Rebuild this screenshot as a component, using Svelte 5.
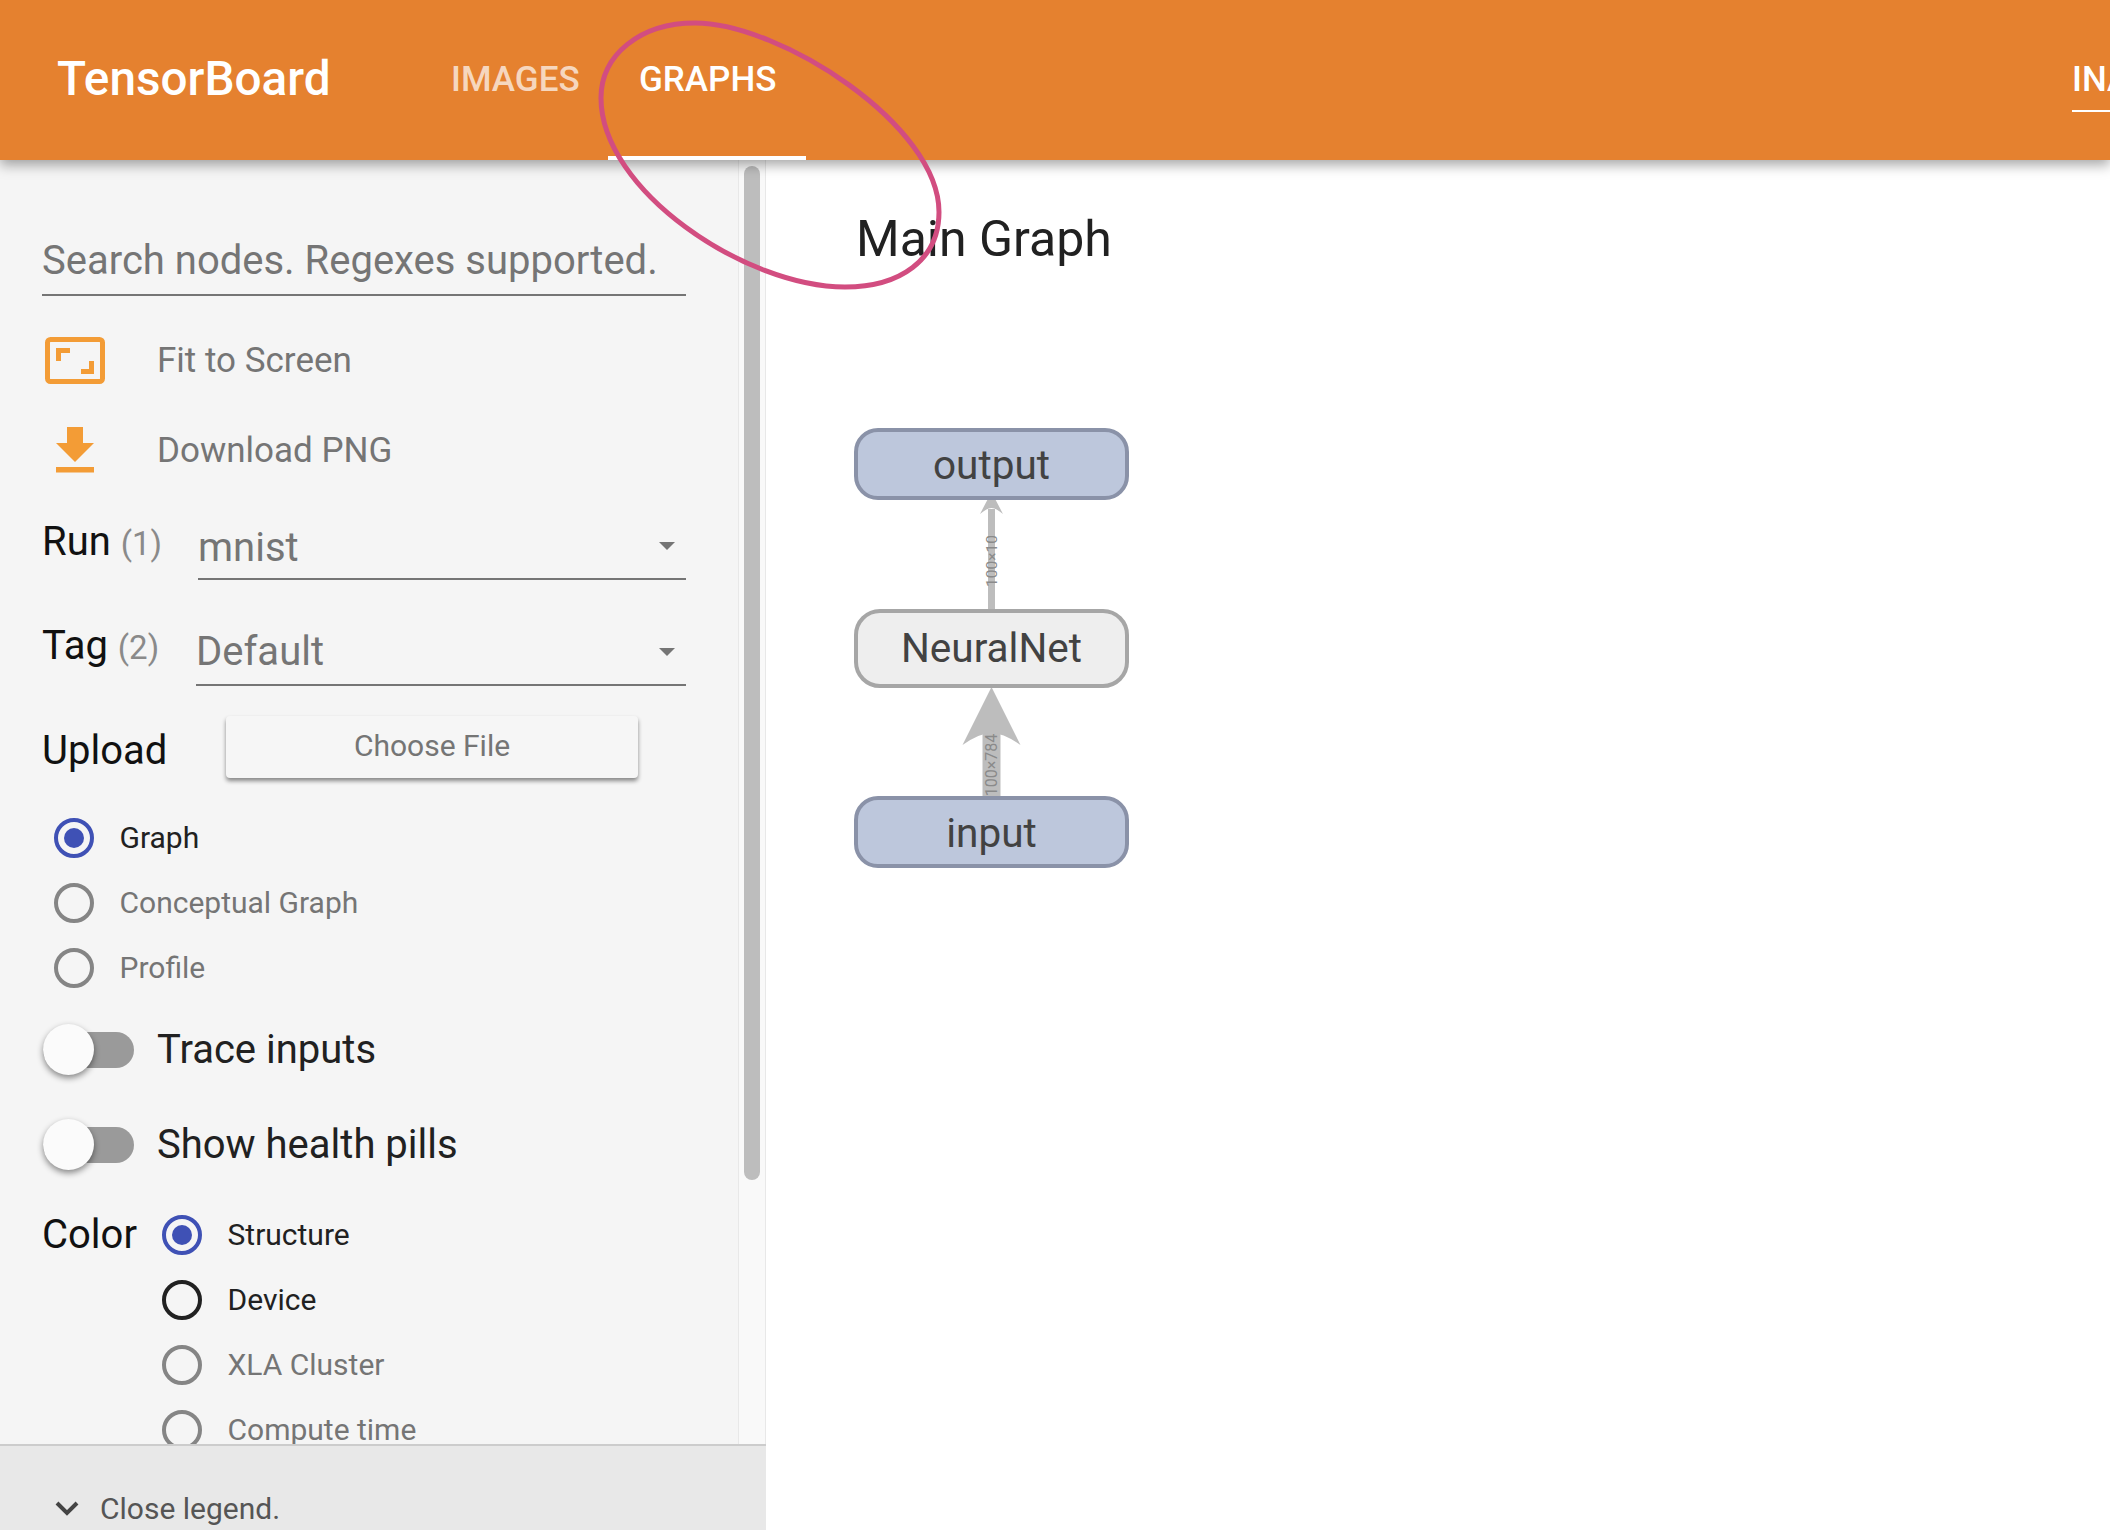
<script>
  const graphModes = [
    { label: "Graph", state: "on" },
    { label: "Conceptual Graph", state: "off" },
    { label: "Profile", state: "off" }
  ];
  const colorModes = [
    { label: "Structure", state: "on" },
    { label: "Device", state: "focus" },
    { label: "XLA Cluster", state: "off" },
    { label: "Compute time", state: "off" }
  ];
  const toggles = ["Trace inputs", "Show health pills"];
</script>

<div class="page">
  <header class="topbar">
    <div class="brand">TensorBoard</div>
    <nav class="tabs">
      <div class="tab">IMAGES</div>
      <div class="tab active">GRAPHS</div>
    </nav>
    <div class="inactive">INACTIVE</div>
  </header>

  <div class="body">
    <aside class="sidebar">
      <div class="scroller">
        <div class="pane">
          <div class="search">Search nodes. Regexes supported.</div>

          <div class="action">
            <svg class="action-icon" width="60" height="47" viewBox="0 0 60 47">
              <rect x="2.500" y="2.500" width="55" height="42" rx="3" fill="none" stroke="#f39c36" stroke-width="5" />
              <path d="M11 24V11h14v5H16v8zM49 24v13H36v-5h8v-8z" fill="#f39c36" />
            </svg>
            <span>Fit to Screen</span>
          </div>
          <div class="action">
            <svg class="action-icon" width="60" height="46" viewBox="0 0 60 46">
              <path d="M22 0h16v16h11L30 35 11 16h11zM11 40h38v5.500H11z" fill="#f39c36" />
            </svg>
            <span>Download PNG</span>
          </div>

          <div class="select-row run">
            <div class="field-label">Run <span class="count">(1)</span></div>
            <div class="select">
              <span>mnist</span>
              <i class="caret"></i>
            </div>
          </div>
          <div class="select-row tag">
            <div class="field-label">Tag <span class="count">(2)</span></div>
            <div class="select">
              <span>Default</span>
              <i class="caret"></i>
            </div>
          </div>

          <div class="upload">
            <div class="field-label">Upload</div>
            <button class="file-btn">Choose File</button>
          </div>

          <div class="radios graph-modes">
            {#each graphModes as mode}
              <div class="radio {mode.state}">
                <i class="dot"></i>
                <span>{mode.label}</span>
              </div>
            {/each}
          </div>

          {#each toggles as name}
            <div class="toggle">
              <div class="switch"><i class="knob"></i></div>
              <span>{name}</span>
            </div>
          {/each}

          <div class="color-row">
            <div class="field-label">Color</div>
            <div class="radios">
              {#each colorModes as mode}
                <div class="radio {mode.state}">
                  <i class="dot"></i>
                  <span>{mode.label}</span>
                </div>
              {/each}
            </div>
          </div>
        </div>
        <div class="track"><div class="thumb"></div></div>
      </div>
      <footer class="legend">
        <svg width="26" height="16" viewBox="0 0 26 16">
          <path d="M3 3l10 10L23 3" fill="none" stroke="#444" stroke-width="4" />
        </svg>
        <span>Close legend.</span>
      </footer>
    </aside>

    <main class="main">
      <h1>Main Graph</h1>
      <svg class="scene" width="300" height="470" viewBox="0 0 300 470">
        <!-- upper edge -->
        <rect x="130" y="105" width="7" height="100" fill="#bdbdbd" />
        <path d="M133.500 88 145 110q-7-6-11.500-6T122 110z" fill="#bdbdbd" />
        <text class="edge" transform="translate(133.500 157) rotate(-90)" text-anchor="middle" y="5" font-size="15.500">100×10</text>
        <!-- lower edge -->
        <rect x="124.500" y="320" width="18" height="76" fill="#bdbdbd" />
        <path d="M133.500 283 162.500 341q-17-12-29-12t-29 12z" fill="#bdbdbd" />
        <text class="edge" transform="translate(133.500 361) rotate(-90)" text-anchor="middle" y="5" font-size="16">100×784</text>

        <rect class="const" x="-2" y="26" width="271" height="68" rx="22" />
        <text class="label" x="133.500" y="75" text-anchor="middle">output</text>

        <rect class="meta" x="-2" y="207" width="271" height="75" rx="24" />
        <text class="label" x="133.500" y="258" text-anchor="middle">NeuralNet</text>

        <rect class="const" x="-2" y="394" width="271" height="68" rx="22" />
        <text class="label" x="133.500" y="443" text-anchor="middle">input</text>
      </svg>
    </main>
  </div>

  <svg class="scribble" width="2110" height="320" viewBox="0 0 2110 320">
    <path d="M695 23C780 23 939 125 939 212C939 260 900 287 845 287C745 287 601 190 601 98C601 55 640 23 695 23Z" fill="none" stroke="#d24d80" stroke-width="5" />
  </svg>
</div>

<style>
  :global(body) {
    margin: 0;
    background: #fff;
  }
  .page {
    position: relative;
    width: 2110px;
    height: 1530px;
    overflow: hidden;
    font-family: Roboto, "Noto Sans", sans-serif;
    color: #212121;
  }
  .topbar {
    position: relative;
    z-index: 2;
    display: flex;
    height: 160px;
    padding-left: 57px;
    background: #e5812f;
    color: #fff;
    box-shadow: 0 5px 12px rgba(0, 0, 0, 0.35);
  }
  .brand {
    width: 394px;
    padding-top: 52px;
    font-size: 47.700px;
    font-weight: 500;
    line-height: 54px;
  }
  .tabs {
    display: flex;
  }
  .tab {
    width: 157px;
    padding-top: 59px;
    font-size: 35px;
    font-weight: 500;
    line-height: 42px;
    color: rgba(255, 255, 255, 0.7);
    text-align: left;
  }
  .tab.active {
    width: 198px;
    box-sizing: border-box;
    height: 160px;
    padding-left: 31px;
    color: #fff;
    border-bottom: 4px solid #fff;
  }
  .inactive {
    position: absolute;
    left: 2072px;
    top: 59px;
    width: 120px;
    height: 51px;
    font-size: 35px;
    font-weight: 500;
    line-height: 42px;
    white-space: nowrap;
    border-bottom: 2px solid #fff;
  }
  .body {
    display: flex;
    height: 1370px;
  }
  .sidebar {
    display: flex;
    flex-direction: column;
    width: 766px;
    background: #f5f5f5;
  }
  .scroller {
    display: flex;
    height: 1284px;
    overflow: hidden;
  }
  .pane {
    box-sizing: border-box;
    width: 739px;
    padding: 60px 0 0 42px;
    border-right: 1px solid #e8e8e8;
  }
  .track {
    flex: 1;
    padding: 6px 0 0 5px;
    background: #f9f9f9;
    border-right: 1px solid #e8e8e8;
  }
  .thumb {
    width: 16px;
    height: 1014px;
    border-radius: 8px;
    background: #bdbdbd;
  }
  .search {
    box-sizing: border-box;
    width: 644px;
    height: 76px;
    margin-bottom: 19px;
    font-size: 40px;
    line-height: 82px;
    color: #757575;
    white-space: nowrap;
    border-bottom: 2px solid #757575;
  }
  .action {
    display: flex;
    align-items: center;
    height: 90px;
    font-size: 35px;
    color: #757575;
  }
  .action-icon {
    flex: none;
    margin: 0 52px 0 3px;
  }
  .select-row {
    display: flex;
    align-items: flex-end;
    width: 644px;
  }
  .select-row.run {
    height: 85px;
  }
  .select-row.tag {
    height: 106px;
  }
  .field-label {
    font-size: 40px;
    line-height: 48px;
    color: #111;
    white-space: nowrap;
  }
  .count {
    font-size: 33px;
    color: #8a8a8a;
  }
  .select-row .field-label {
    width: 156px;
    padding-bottom: 12px;
  }
  .tag .field-label {
    width: 154px;
    padding-bottom: 14px;
  }
  .select {
    position: relative;
    flex: 1;
    box-sizing: border-box;
    height: 62px;
    font-size: 40px;
    line-height: 60px;
    color: #757575;
    border-bottom: 2px solid #757575;
  }
  .tag .select {
    line-height: 56px;
  }
  .caret {
    position: absolute;
    right: 11px;
    top: 24px;
    width: 0;
    height: 0;
    border-left: 8px solid transparent;
    border-right: 8px solid transparent;
    border-top: 8px solid #757575;
  }
  .upload {
    display: flex;
    align-items: center;
    gap: 59px;
    height: 62px;
    margin-top: 30px;
  }
  .upload .field-label {
    width: 125px;
    margin-top: 8px;
  }
  .file-btn {
    width: 412px;
    height: 62px;
    padding: 0 0 4px;
    font-family: inherit;
    font-size: 30px;
    color: #757575;
    background: #f6f6f6;
    border: none;
    border-radius: 4px;
    box-shadow: 0 3px 4px rgba(0, 0, 0, 0.45);
  }
  .radio {
    display: flex;
    align-items: center;
    height: 65px;
    font-size: 30px;
    color: #757575;
  }
  .radio .dot {
    position: relative;
    flex: none;
    box-sizing: border-box;
    width: 40px;
    height: 40px;
    margin-right: 25.500px;
    border: 4px solid #858585;
    border-radius: 50%;
  }
  .radio.on,
  .radio.focus {
    color: #212121;
  }
  .radio.on .dot {
    border-color: #3f51b5;
  }
  .radio.on .dot::after {
    content: "";
    position: absolute;
    left: 6px;
    top: 6px;
    width: 20px;
    height: 20px;
    border-radius: 50%;
    background: #3f51b5;
  }
  .radio.focus .dot {
    border-color: #212121;
  }
  .graph-modes {
    margin: 27px 0 2px 12px;
  }
  .toggle {
    display: flex;
    align-items: center;
    height: 95px;
    font-size: 40px;
  }
  .switch {
    position: relative;
    width: 91px;
    height: 36px;
    margin: 0 23px 0 1px;
    border-radius: 18px;
    background: #9a9a9a;
  }
  .knob {
    position: absolute;
    left: 0;
    top: -8px;
    width: 51px;
    height: 51px;
    border-radius: 50%;
    background: #fbfbfb;
    box-shadow: 0 3px 6px rgba(0, 0, 0, 0.45);
  }
  .color-row {
    display: flex;
    align-items: flex-start;
    margin-top: 10px;
  }
  .color-row .field-label {
    width: 120px;
    padding-top: 9px;
  }
  .legend {
    display: flex;
    align-items: center;
    gap: 20px;
    box-sizing: border-box;
    height: 86px;
    padding: 40px 0 0 54px;
    font-size: 30px;
    color: #555;
    background: #e8e8e8;
    border-top: 2px solid #ccc;
  }
  .main {
    flex: 1;
    padding: 48px 0 0 90px;
  }
  h1 {
    margin: 0;
    font-size: 50px;
    font-weight: 400;
    line-height: 62px;
    color: #212121;
  }
  .scene {
    display: block;
    margin: 134px 0 0 2px;
    overflow: visible;
  }
  .const {
    fill: #bdc7dc;
    stroke: #8a92a8;
    stroke-width: 4;
  }
  .meta {
    fill: #eee;
    stroke: #a6a6a6;
    stroke-width: 4;
  }
  .label {
    font-size: 40.500px;
    fill: #424242;
  }
  .edge {
    fill: #8a8a8a;
  }
  .scribble {
    position: absolute;
    left: 0;
    top: 0;
    z-index: 3;
    pointer-events: none;
  }
</style>
